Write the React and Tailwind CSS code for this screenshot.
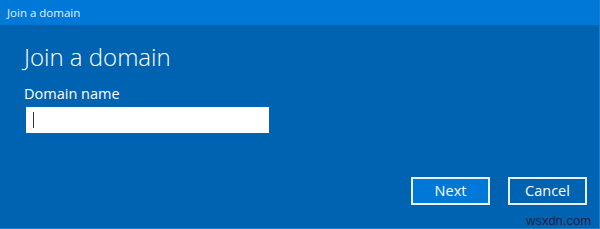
export default function App() {
  return (
    <div
      className="w-[600px] h-[229px] flex flex-col bg-[#0063b1] border-r border-b border-[#1a7fd4] overflow-hidden"
      style={{ fontFamily: '"Open Sans", "Noto Sans", sans-serif' }}
    >
      {/* title bar */}
      <div className="h-[25px] shrink-0 bg-[#0078d7] flex items-center px-[7px] text-[11.5px] text-white/90">
        Join a domain
      </div>

      <div className="flex-1 flex flex-col pl-6 pr-[12px] pt-[16px]">
        <h1 className="text-[24px] leading-[32px] font-light text-white">Join a domain</h1>

        <label className="mt-[11px] text-[14.5px] leading-[20px] text-white">Domain name</label>
        <div className="mt-[3px] ml-[2px] w-[243px] h-[26px] bg-white flex items-center px-[7px]">
          <div className="w-px h-[16px] bg-[#333]" />
        </div>

        <div className="mt-auto flex justify-end items-end gap-[18px] pb-[23px]">
          <button className="w-[79px] h-[28px] bg-[#0078d7] border-2 border-white/90 text-white text-[14.5px] leading-none">
            Next
          </button>
          <button className="w-[79px] h-[28px] border-2 border-white/90 text-white text-[14.5px] leading-none">
            Cancel
          </button>
        </div>
      </div>

      <div className="absolute left-[526px] top-[211px] text-[13px] text-[#1b2340]" style={{ fontFamily: '"Liberation Sans", sans-serif' }}>
        wsxdn.com
      </div>
    </div>
  );
}
